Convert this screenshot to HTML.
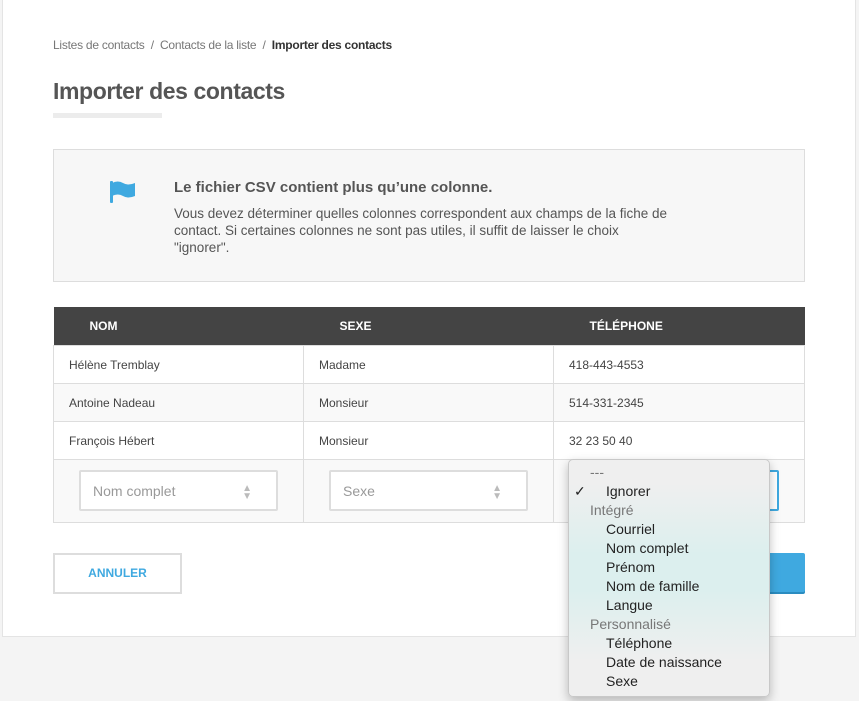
<!DOCTYPE html>
<html><head><meta charset="utf-8"><style>
body{margin:0;width:859px;height:701px;background:#f4f4f4;font-family:"Liberation Sans",sans-serif;position:relative;overflow:hidden}
.card{position:absolute;left:2px;top:0;width:852px;height:636px;background:#fff;border:1px solid #e4e4e4;border-top:none}
.a{position:absolute}
.bc{left:53px;top:38px;font-size:12px;color:#777;letter-spacing:-0.25px;white-space:nowrap}
.bc b{color:#333;font-weight:bold}
h1{position:absolute;left:53px;top:78px;margin:0;font-size:23px;color:#555;font-weight:bold;letter-spacing:-0.4px}
.ul{left:53px;top:113px;width:109px;height:5px;background:#ececec}
.info{left:53px;top:149px;width:750px;height:131px;background:#f7f7f7;border:1px solid #ddd}
table{position:absolute;left:53px;top:307px;width:752px;border-collapse:collapse;font-size:12px;color:#444}
th{background:#444;color:#fff;height:38px;font-size:12px;text-align:left;padding:0 0 0 36px}
td{border:1px solid #ddd;height:37px;padding:0 15px}
tr.r2 td{background:#f9f9f9}
.sel{position:absolute;width:199px;height:41px;border:2px solid #ddd;border-radius:2px;background:#fff;box-sizing:border-box;font-size:14px;color:#999;padding:11px 12px}
.ar{position:absolute;right:24px;top:13px;font-size:10px;line-height:8px;color:#bbb}
.dd{left:568px;top:459px;width:200px;height:236px;border-radius:5px;border:1px solid #c8c8c8;box-shadow:0 4px 10px rgba(0,0,0,.25);background:linear-gradient(#efefef 10%,#dcefee 40%,#dcefee 55%,#efefef 85%);font-size:14px;color:#222}
.dd div{position:absolute;left:37px;height:19px}
.dd .g{left:21px;color:#777}
</style></head><body>
<div class="card"></div>
<div class="a bc">Listes de contacts &nbsp;/&nbsp; Contacts de la liste &nbsp;/&nbsp; <b>Importer des contacts</b></div>
<h1>Importer des contacts</h1>
<div class="a ul"></div>
<div class="a info">
<svg class="a" style="left:56px;top:31px" width="26" height="22" viewBox="0 0 26 22"><rect x="0" y="0" width="3" height="22" rx="1" fill="#3fa9e0"/><path d="M2 2 Q8 -1 13 2 Q18 5 25 2 L25 15 Q18 18 13 15 Q8 12 2 15Z" fill="#3fa9e0"/></svg>
<div class="a" style="left:120px;top:29px;font-size:15px;font-weight:bold;color:#555">Le fichier CSV contient plus qu’une colonne.</div>
<div class="a" style="left:120px;top:55px;width:560px;font-size:13.5px;line-height:17px;color:#555;white-space:nowrap">Vous devez déterminer quelles colonnes correspondent aux champs de la fiche de<br>contact. Si certaines colonnes ne sont pas utiles, il suffit de laisser le choix<br>"ignorer".</div>
</div>
<table>
<tr><th style="width:214px">NOM</th><th style="width:214px">SEXE</th><th>TÉLÉPHONE</th></tr>
<tr><td>Hélène Tremblay</td><td>Madame</td><td>418-443-4553</td></tr>
<tr class="r2"><td>Antoine Nadeau</td><td>Monsieur</td><td>514-331-2345</td></tr>
<tr><td>François Hébert</td><td>Monsieur</td><td>32 23 50 40</td></tr>
<tr class="r2"><td style="height:62px"></td><td></td><td></td></tr>
</table>
<div class="sel" style="left:79px;top:470px">Nom complet<span class="ar">▲<br>▼</span></div>
<div class="sel" style="left:329px;top:470px">Sexe<span class="ar">▲<br>▼</span></div>
<div class="sel" style="left:580px;top:470px;border-color:#3fa9e0"></div>
<div class="a" style="left:53px;top:553px;width:125px;height:37px;border:2px solid #ddd;font-size:12px;font-weight:bold;color:#3fa9e0;text-align:center;line-height:37px">ANNULER</div>
<div class="a" style="left:640px;top:553px;width:165px;height:39px;background:#3fa9e0;border-radius:2px;box-shadow:0 2px 0 #2a8cc0"></div>
<div class="a dd">
<div class="g" style="top:4px">---</div>
<div style="left:5px;top:23px">✓</div>
<div style="top:23px">Ignorer</div>
<div class="g" style="top:42px">Intégré</div>
<div style="top:61px">Courriel</div>
<div style="top:80px">Nom complet</div>
<div style="top:99px">Prénom</div>
<div style="top:118px">Nom de famille</div>
<div style="top:137px">Langue</div>
<div class="g" style="top:156px">Personnalisé</div>
<div style="top:175px">Téléphone</div>
<div style="top:194px">Date de naissance</div>
<div style="top:213px">Sexe</div>
</div>
</body></html>
